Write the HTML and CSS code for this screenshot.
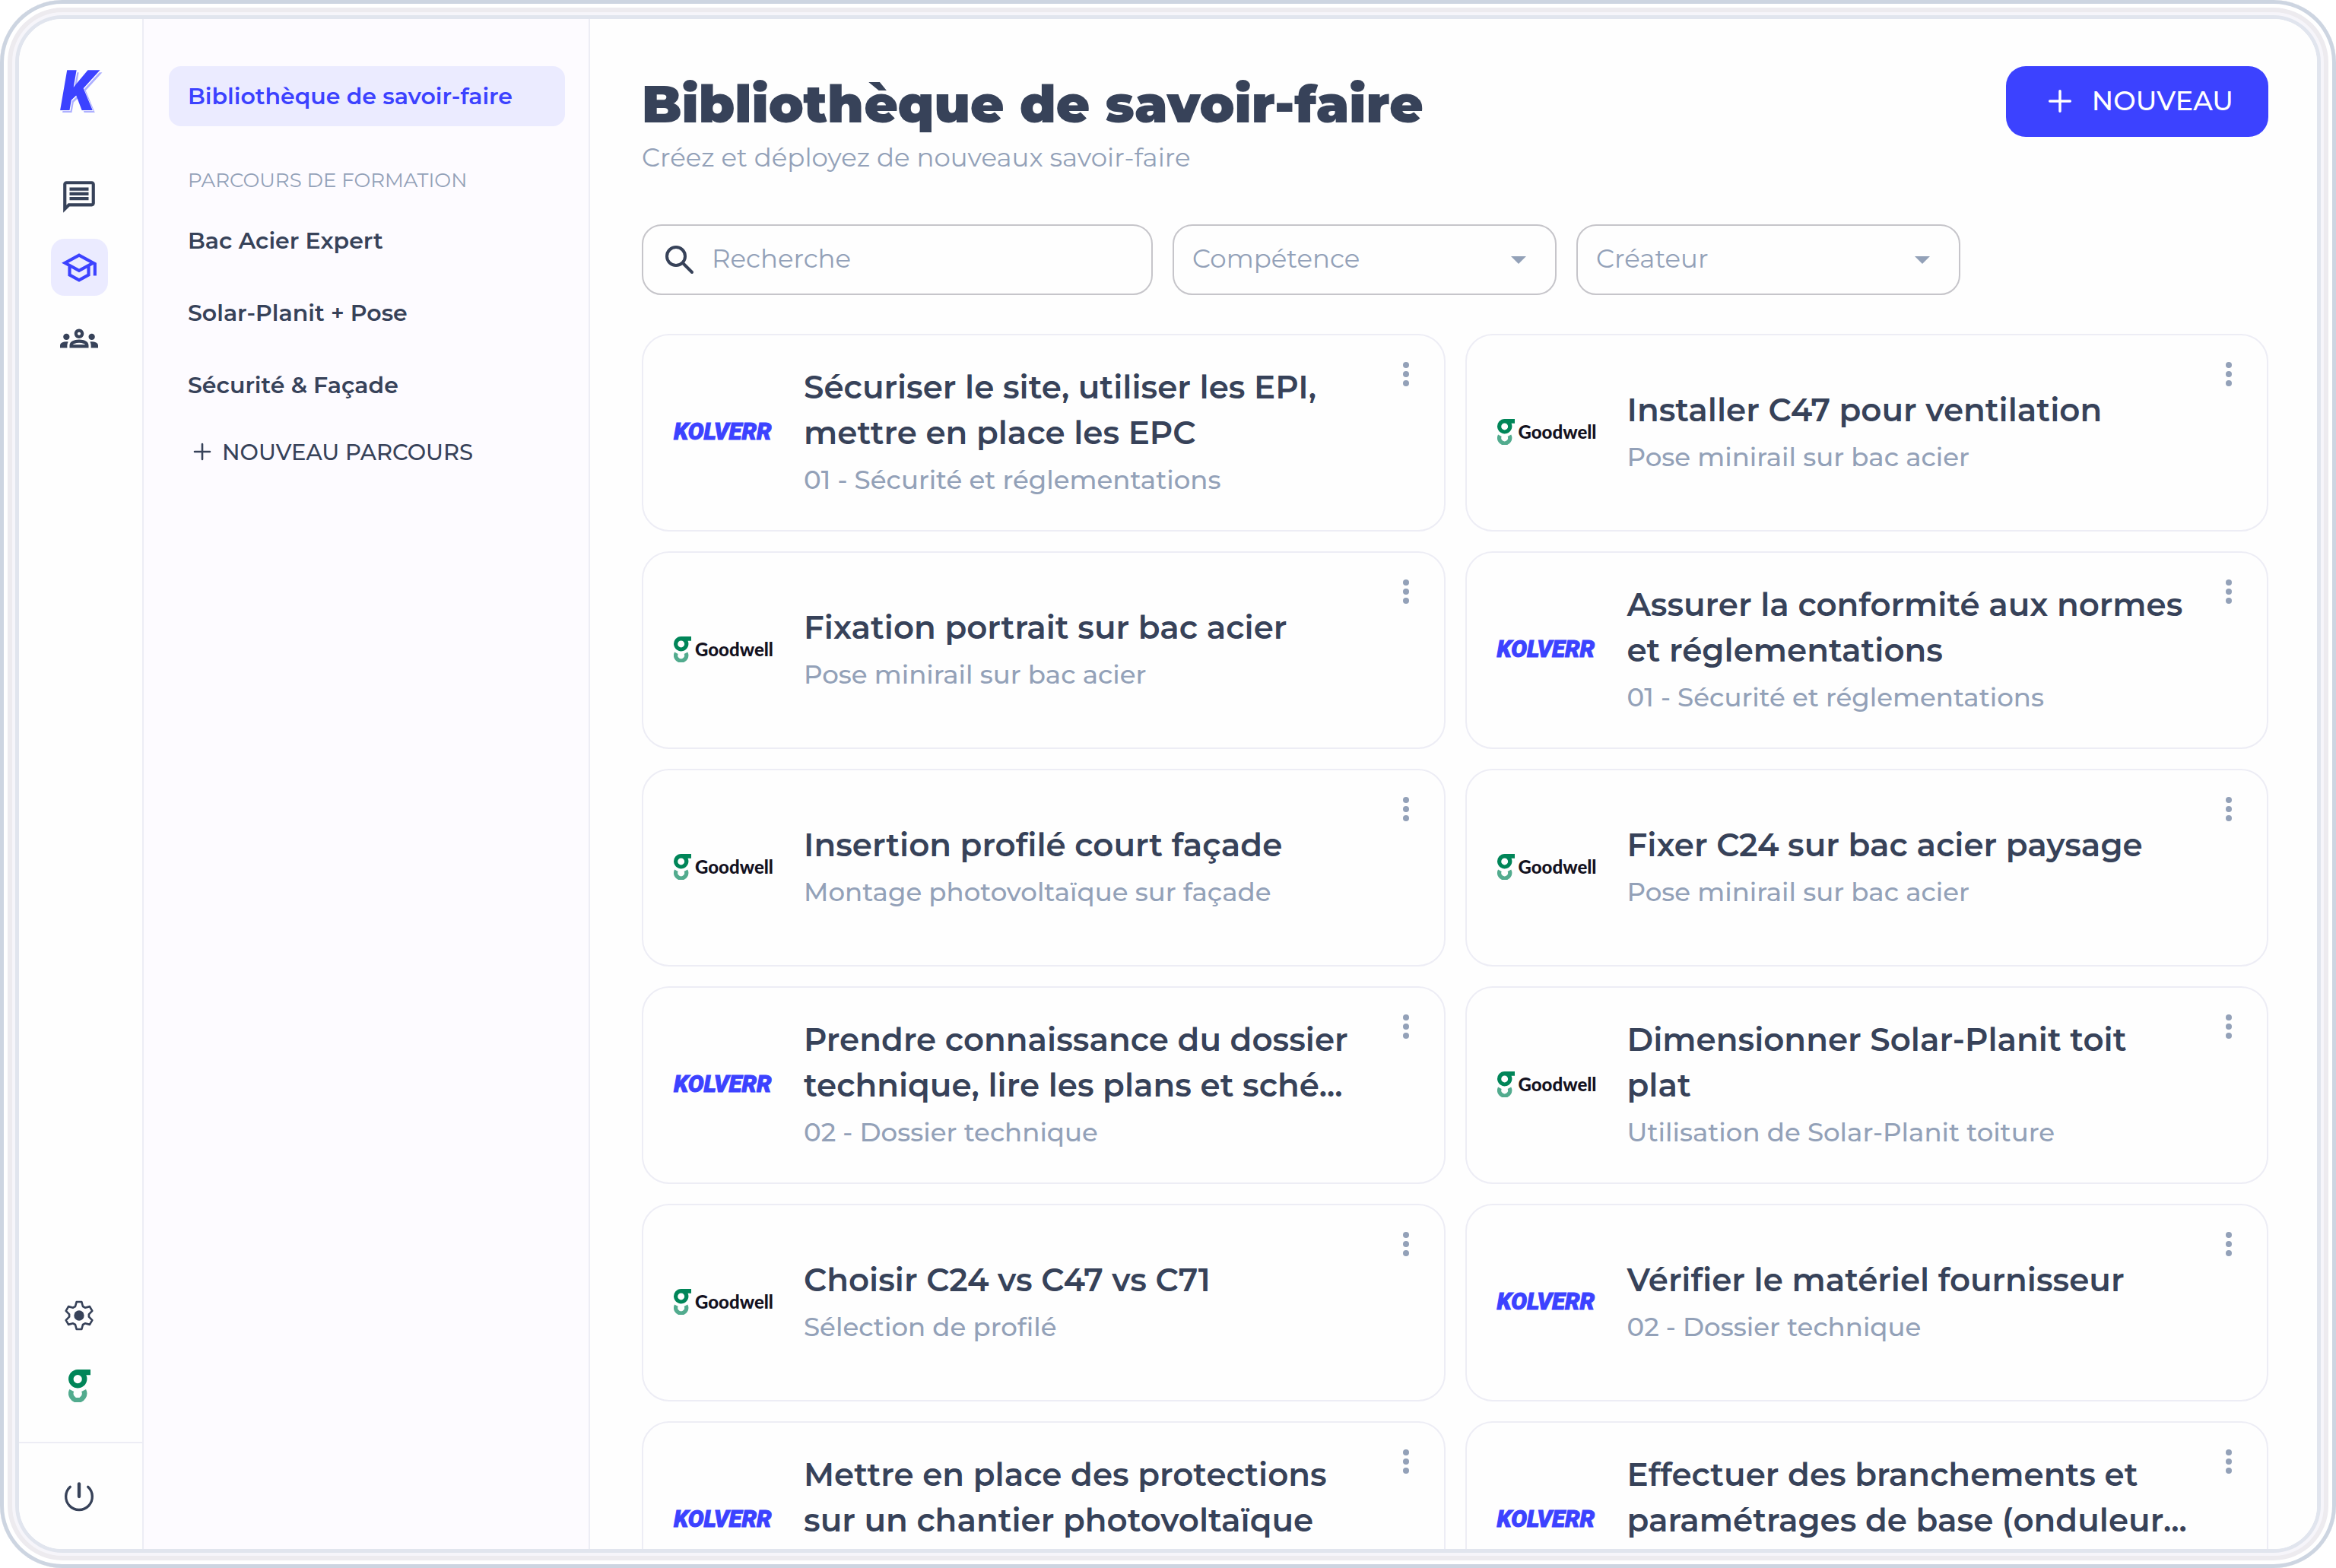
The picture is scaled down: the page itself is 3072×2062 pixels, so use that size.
FILE: index.html
```html
<!DOCTYPE html>
<html lang="fr">
<head>
<meta charset="utf-8">
<meta name="viewport" content="width=device-width, initial-scale=1">
<title>Bibliothèque de savoir-faire</title>
<link rel="stylesheet" href="styles.css">
</head>
<body>
<svg class="sprite" aria-hidden="true">
  <symbol id="g-mark" viewBox="60 339 88 130">
    <path fill="#008558" fill-rule="evenodd" d="M97 339h51v22h-17a37 37 0 1 1-34-22zM97 360a17 17 0 1 0 0 34a17 17 0 0 0 0-34z"/>
    <path fill="none" stroke="#52ab8e" stroke-width="20" d="M73 422a27 27 0 1 0 48 0"/>
  </symbol>
  <symbol id="dots" viewBox="0 0 40 40">
    <circle cx="20" cy="8" r="4"/><circle cx="20" cy="20" r="4"/><circle cx="20" cy="32" r="4"/>
  </symbol>
  <symbol id="plus" viewBox="0 0 24 24">
    <path fill="none" stroke="currentColor" stroke-width="2.6" stroke-linecap="round" d="M12 2v20M2 12h20"/>
  </symbol>
  <symbol id="caret" viewBox="0 0 20 10"><path d="M0 0h20L10 10z"/></symbol>
</svg>

<div class="frame">
  <div class="screen">
    <nav class="rail" aria-label="Navigation principale">
      <a class="brand" href="#">K</a>
      <div class="rail-group">
        <a class="rail-link" href="#" aria-label="Messages"><svg class="icon" viewBox="0 0 24 24"><path d="M4 4h16v12H5.17L4 17.17V4m0-2c-1.1 0-1.99.9-1.99 2L2 22l4-4h14c1.1 0 2-.9 2-2V4c0-1.1-.9-2-2-2H4zm2 10h12v2H6v-2zm0-3h12v2H6V9zm0-3h12v2H6V6z"/></svg></a>
        <a class="rail-link active" href="#" aria-label="Formation"><svg class="icon" viewBox="0 0 24 24"><path d="M12 3 1 9l4 2.18v6L12 21l7-3.82v-6l2-1.09V17h2V9L12 3zm6.82 6L12 12.72 5.18 9 12 5.28 18.82 9zM17 15.99l-5 2.73-5-2.73v-3.72L12 15l5-2.73v3.72z"/></svg></a>
        <a class="rail-link" href="#" aria-label="Équipes"><svg class="icon" viewBox="0 0 24 24"><path d="M4 13c1.1 0 2-.9 2-2s-.9-2-2-2-2 .9-2 2 .9 2 2 2zm1.13 1.1c-.37-.06-.74-.1-1.13-.1-.99 0-1.93.21-2.78.58C.48 14.9 0 15.62 0 16.43V18h4.5v-1.61c0-.83.23-1.61.63-2.29zM20 13c1.1 0 2-.9 2-2s-.9-2-2-2-2 .9-2 2 .9 2 2 2zm4 3.43c0-.81-.48-1.53-1.22-1.85-.85-.37-1.79-.58-2.78-.58-.39 0-.76.04-1.13.1.4.68.63 1.46.63 2.29V18H24v-1.57zM16.24 13.65c-1.17-.52-2.61-.9-4.24-.9s-3.07.39-4.24.9C6.68 14.13 6 15.21 6 16.39V18h12v-1.61c0-1.18-.68-2.26-1.76-2.74zM8.07 16c.09-.23.13-.39.91-.69.97-.38 1.99-.56 3.02-.56s2.05.18 3.02.56c.77.3.81.46.91.69H8.07zM12 8c.55 0 1 .45 1 1s-.45 1-1 1-1-.45-1-1 .45-1 1-1m0-2c-1.66 0-3 1.34-3 3s1.34 3 3 3 3-1.34 3-3-1.34-3-3-3z"/></svg></a>
      </div>
      <div class="rail-group rail-bottom">
        <a class="rail-link" href="#" aria-label="Paramètres"><svg class="icon-small" viewBox="-60 -60 120 120"><path fill="none" stroke="currentColor" stroke-width="8" stroke-linejoin="round" d="M-15-36L-10-54H10L15-36L23.7-31L41.8-35.7L51.8-18.3L38.7-5V5L51.8 18.3L41.8 35.7L23.7 31L15 36L10 54H-10L-15 36L-23.7 31L-41.8 35.7L-51.8 18.3L-38.7 5V-5L-51.8-18.3L-41.8-35.7L-23.7-31z"/><circle r="20"/></svg></a>
        <a class="rail-link" href="#" aria-label="Goodwell"><svg class="org-mark"><use href="#g-mark"/></svg></a>
      </div>
      <div class="rail-exit">
        <button class="rail-link" type="button" aria-label="Déconnexion"><svg class="icon-small" viewBox="-60 -60 120 120"><path fill="none" stroke="currentColor" stroke-width="10" stroke-linecap="round" d="M-35-38A52 52 0 1 0 35-38"/><path stroke="currentColor" stroke-width="13" stroke-linecap="round" d="M0-50V0"/></svg></button>
      </div>
    </nav>

    <aside class="sidebar">
      <a class="side-link active" href="#">Bibliothèque de savoir-faire</a>
      <h2 class="side-heading">PARCOURS DE FORMATION</h2>
      <div class="side-list">
        <a class="side-link" href="#">Bac Acier Expert</a>
        <a class="side-link" href="#">Solar-Planit + Pose</a>
        <a class="side-link" href="#">Sécurité &amp; Façade</a>
      </div>
      <button class="side-new" type="button"><svg class="side-plus"><use href="#plus"/></svg>NOUVEAU PARCOURS</button>
    </aside>

    <main class="content">
      <header class="page-head">
        <div>
          <h1 class="page-title">Bibliothèque de savoir-faire</h1>
          <p class="page-sub">Créez et déployez de nouveaux savoir-faire</p>
        </div>
        <button class="primary" type="button"><svg class="primary-plus"><use href="#plus"/></svg>NOUVEAU</button>
      </header>

      <form class="filters">
        <label class="field search">
          <svg class="search-icon" viewBox="0 0 40 40" aria-hidden="true"><circle cx="15" cy="15" r="12" fill="none" stroke="currentColor" stroke-width="4"/><path stroke="currentColor" stroke-width="4" stroke-linecap="round" d="M25 25l11 11"/></svg>
          <input type="search" placeholder="Recherche" aria-label="Recherche">
        </label>
        <label class="field select">
          <select aria-label="Compétence"><option>Compétence</option></select>
          <svg class="caret"><use href="#caret"/></svg>
        </label>
        <label class="field select">
          <select aria-label="Créateur"><option>Créateur</option></select>
          <svg class="caret"><use href="#caret"/></svg>
        </label>
      </form>

      <section class="cards">
        <article class="card"><div class="logo kolverr">KOLVERR</div><div class="card-text"><h3>Sécuriser le site, utiliser les EPI,<br>mettre en place les EPC</h3><p>01 - Sécurité et réglementations</p></div><button class="more" type="button" aria-label="Options"><svg><use href="#dots"/></svg></button></article>
        <article class="card"><div class="logo goodwell"><svg><use href="#g-mark"/></svg>Goodwell</div><div class="card-text"><h3>Installer C47 pour ventilation</h3><p>Pose minirail sur bac acier</p></div><button class="more" type="button" aria-label="Options"><svg><use href="#dots"/></svg></button></article>
        <article class="card"><div class="logo goodwell"><svg><use href="#g-mark"/></svg>Goodwell</div><div class="card-text"><h3>Fixation portrait sur bac acier</h3><p>Pose minirail sur bac acier</p></div><button class="more" type="button" aria-label="Options"><svg><use href="#dots"/></svg></button></article>
        <article class="card"><div class="logo kolverr">KOLVERR</div><div class="card-text"><h3>Assurer la conformité aux normes<br>et réglementations</h3><p>01 - Sécurité et réglementations</p></div><button class="more" type="button" aria-label="Options"><svg><use href="#dots"/></svg></button></article>
        <article class="card"><div class="logo goodwell"><svg><use href="#g-mark"/></svg>Goodwell</div><div class="card-text"><h3>Insertion profilé court façade</h3><p>Montage photovoltaïque sur façade</p></div><button class="more" type="button" aria-label="Options"><svg><use href="#dots"/></svg></button></article>
        <article class="card"><div class="logo goodwell"><svg><use href="#g-mark"/></svg>Goodwell</div><div class="card-text"><h3>Fixer C24 sur bac acier paysage</h3><p>Pose minirail sur bac acier</p></div><button class="more" type="button" aria-label="Options"><svg><use href="#dots"/></svg></button></article>
        <article class="card"><div class="logo kolverr">KOLVERR</div><div class="card-text"><h3>Prendre connaissance du dossier<br>technique, lire les plans et sché...</h3><p>02 - Dossier technique</p></div><button class="more" type="button" aria-label="Options"><svg><use href="#dots"/></svg></button></article>
        <article class="card"><div class="logo goodwell"><svg><use href="#g-mark"/></svg>Goodwell</div><div class="card-text"><h3>Dimensionner Solar-Planit toit<br>plat</h3><p>Utilisation de Solar-Planit toiture</p></div><button class="more" type="button" aria-label="Options"><svg><use href="#dots"/></svg></button></article>
        <article class="card"><div class="logo goodwell"><svg><use href="#g-mark"/></svg>Goodwell</div><div class="card-text"><h3>Choisir C24 vs C47 vs C71</h3><p>Sélection de profilé</p></div><button class="more" type="button" aria-label="Options"><svg><use href="#dots"/></svg></button></article>
        <article class="card"><div class="logo kolverr">KOLVERR</div><div class="card-text"><h3>Vérifier le matériel fournisseur</h3><p>02 - Dossier technique</p></div><button class="more" type="button" aria-label="Options"><svg><use href="#dots"/></svg></button></article>
        <article class="card"><div class="logo kolverr">KOLVERR</div><div class="card-text"><h3>Mettre en place des protections<br>sur un chantier photovoltaïque</h3><p></p></div><button class="more" type="button" aria-label="Options"><svg><use href="#dots"/></svg></button></article>
        <article class="card"><div class="logo kolverr">KOLVERR</div><div class="card-text"><h3>Effectuer des branchements et<br>paramétrages de base (onduleur...</h3><p></p></div><button class="more" type="button" aria-label="Options"><svg><use href="#dots"/></svg></button></article>
      </section>
    </main>
  </div>
</div>
</body>
</html>
```
FILE: styles.css
```css
:root {
  --ink: #374259;
  --muted: #93a1b8;
  --blue: #3c42ff;
  --tint: #ebebff;
  --line: #ededf5;
}

* { box-sizing: border-box; }

body {
  margin: 0;
  background: #fff;
  color: var(--ink);
  font-family: Montserrat, Inter, sans-serif;
  font-weight: 500;
}

h1, h2, h3, p { margin: 0; }
a { color: inherit; text-decoration: none; }
button { border: 0; padding: 0; background: none; color: inherit; font: inherit; cursor: pointer; }
svg { display: block; fill: currentColor; }
.sprite { position: absolute; width: 0; height: 0; }

/* device bezel */
.frame {
  height: 100vh;
  padding: 25px;
  border-radius: 82px;
  box-shadow:
    inset 0 0 0 5px #cdd5e1,
    inset 0 0 0 10px #fff,
    inset 0 0 0 16px #edebef,
    inset 0 0 0 20px #f6f5fa,
    inset 0 0 0 25px #e1e5ee;
}

.screen {
  display: flex;
  height: 100%;
  overflow: hidden;
  border-radius: 57px;
  background: #fefefe;
}

/* icon rail */
.rail {
  display: flex;
  flex-direction: column;
  flex: 0 0 164px;
  padding-top: 66px;
  border-right: 2px solid var(--line);
}

.brand,
.rail-group,
.rail-exit {
  padding-right: 4px;
}

.brand {
  height: 58px;
  margin-bottom: 72px;
  padding-right: 8px;
  color: var(--blue);
  font: italic 900 74px/58px Roboto, sans-serif;
  text-align: center;
  text-shadow: 1px 1px 0 #fff, 3px 3px 0 #aeb0ff;
}

.rail-group { display: flex; flex-direction: column; align-items: center; gap: 18px; }
.rail-bottom { margin-top: auto; }

.rail-link {
  display: grid;
  place-items: center;
  width: 75px;
  height: 75px;
  border-radius: 18px;
}

.rail-link.active { background: var(--tint); color: var(--blue); }
.icon { width: 50px; height: 50px; }
.icon-small { width: 40px; height: 40px; }
.org-mark { width: 29px; height: 43px; }

.rail-exit {
  display: flex;
  justify-content: center;
  margin-top: 36px;
  padding-top: 32px;
  padding-bottom: 32px;
  border-top: 2px solid var(--line);
}

/* course list */
.sidebar {
  flex: 0 0 587px;
  padding: 62px 31px 0 33px;
  border-right: 2px solid var(--line);
  background: #fdfbff;
}

.side-link {
  display: block;
  padding: 0 25px;
  border-radius: 16px;
  font-size: 30px;
  font-weight: 600;
  line-height: 79px;
}

.side-link.active { background: var(--tint); color: var(--blue); }

.side-heading {
  margin: 51px 0 20px 25px;
  color: var(--muted);
  font-size: 26px;
  font-weight: 400;
  line-height: 40px;
}

.side-list { display: flex; flex-direction: column; gap: 16px; }

.side-new {
  display: flex;
  align-items: center;
  gap: 14px;
  height: 78px;
  margin-top: 9px;
  padding-left: 32px;
  font-size: 29px;
}

.side-plus { width: 24px; height: 24px; }

/* library */
.content {
  flex: 1;
  min-width: 0;
  padding: 62px 64px 0 68px;
}

.page-head { display: flex; justify-content: space-between; align-items: flex-start; }

.page-title { font-size: 68px; font-weight: 900; line-height: 100px; }

.page-sub { color: var(--muted); font-size: 34px; font-weight: 400; line-height: 40px; }

.primary {
  display: flex;
  align-items: center;
  gap: 26px;
  height: 93px;
  padding: 0 46px 2px 55px;
  border-radius: 26px;
  background: var(--blue);
  color: #fff;
  font-size: 35px;
}

.primary-plus { width: 32px; height: 32px; }

.filters { display: flex; gap: 26px; margin-top: 68px; }

.field {
  display: flex;
  align-items: center;
  flex: 0 1 505px;
  height: 93px;
  border: 2px solid #c6c5ca;
  border-radius: 26px;
}

.field input, .field select {
  flex: 1;
  min-width: 0;
  height: 100%;
  padding: 0 0 3px;
  border: 0;
  outline: 0;
  background: none;
  color: var(--muted);
  font: 400 34px Montserrat, Inter, sans-serif;
  appearance: none;
}

.field input::placeholder { color: var(--muted); opacity: 1; }
.search { flex-basis: 672px; gap: 22px; padding: 0 24px 0 28px; }
.search-icon { width: 40px; height: 40px; }
.select { padding: 0 38px 0 24px; }
.caret { width: 20px; height: 10px; color: var(--muted); }

.cards {
  display: grid;
  grid-template-columns: repeat(2, minmax(0, 1fr));
  gap: 26px;
  margin-top: 51px;
}

.card {
  display: flex;
  align-items: center;
  min-height: 260px;
  padding: 0 30px 2px 40px;
  border: 2px solid var(--line);
  border-radius: 36px;
}

.logo { flex: 0 0 171px; white-space: nowrap; }

.kolverr {
  color: var(--blue);
  font: italic 900 31px/40px Roboto, sans-serif;
  -webkit-text-stroke: 1px currentColor;
}

.goodwell {
  display: flex;
  align-items: center;
  gap: 5px;
  color: #14121f;
  font: 900 24px/40px Lato, sans-serif;
}

.goodwell svg { width: 23px; height: 34px; }

.card-text { flex: 1; min-width: 0; white-space: nowrap; }
.card-text h3 { font-size: 42px; font-weight: 600; line-height: 60px; }
.card-text p { min-height: 52px; margin-top: 6px; color: var(--muted); font-size: 34px; line-height: 52px; }

.more { align-self: flex-start; margin-top: 31px; color: var(--muted); }
.more svg { width: 40px; height: 40px; }
```
